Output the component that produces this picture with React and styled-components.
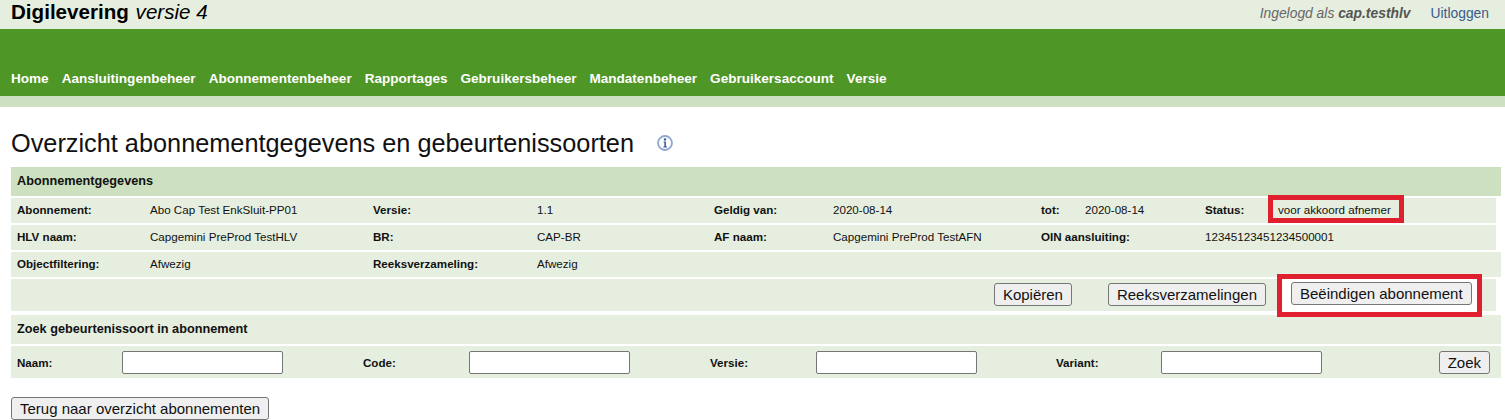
import React from 'react'
import styled, { createGlobalStyle } from 'styled-components'

const GlobalStyle = createGlobalStyle`
  html, body {
    margin: 0;
    padding: 0;
    background: #fff;
    font-family: "Liberation Sans", Arial, sans-serif;
    color: #111;
  }
`

const Page = styled.div`
  width: 1505px;
  height: 420px;
  overflow: hidden;
  position: relative;
`

const TopBar = styled.div`
  height: 29px;
  background: #e5eedf;
  display: flex;
  justify-content: space-between;
  padding: 0 16px 0 11px;
`

const Brand = styled.div`
  font-size: 20.6px;
  line-height: 23px;
  color: #000;
  b { font-weight: 700; }
  i { font-style: italic; margin-left: 1px; }
`

const Session = styled.div`
  display: flex;
  gap: 20px;
  font-size: 13.85px;
  line-height: 27px;
`

const LoggedIn = styled.span`
  font-style: italic;
  color: #666;
  b { color: #555; }
`

const Logout = styled.a`
  color: #3b5b8c;
`

const Nav = styled.nav`
  height: 67px;
  box-sizing: border-box;
  background: #4e9626;
  display: flex;
  align-items: flex-end;
  gap: 13px;
  padding: 0 0 9px 11px;
`

const NavLink = styled.a`
  color: #fff;
  font-size: 13.55px;
  font-weight: 700;
  line-height: 16px;
`

const Strip = styled.div`
  height: 11px;
  background: #cde0bf;
`

const TitleRow = styled.div`
  height: 60px;
  box-sizing: border-box;
  padding: 21px 0 0 11px;
  display: flex;
  align-items: flex-start;
  gap: 22px;
`

const Title = styled.h1`
  margin: 0;
  font-size: 25.3px;
  font-weight: 400;
  line-height: 30px;
  color: #111;
`

const InfoIcon = styled.svg`
  width: 18px;
  height: 18px;
  margin-top: 6px;
`

const Panel = styled.div`
  margin: 0 4px 0 11px;
  display: flex;
  flex-direction: column;
`

const SectionHead = styled.div`
  height: 29px;
  box-sizing: border-box;
  background: ${p => p.$light ? '#e5eedf' : '#cde0bf'};
  font-size: 12.7px;
  font-weight: 700;
  line-height: 28px;
  padding-left: 6px;
  margin: ${p => p.$light ? '4px 0 2px' : '0 0 2px'};
`

const DataRow = styled.div`
  height: 25px;
  box-sizing: border-box;
  background: #e5eedf;
  margin: ${p => p.$short ? '0 5px 2px 0' : '0 0 2px'};
  padding: 0 0 2px 6px;
  display: grid;
  grid-template-columns: 133px 223px 164px 177px 119px 208px 44px 120px 73px 1fr;
  align-items: center;
  font-size: 11.6px;
`

const Label = styled.span`
  font-weight: 700;
  grid-column: ${p => p.$col} / span ${p => p.$span || 1};
`

const Value = styled.span`
  grid-column: ${p => p.$col} / span 1;
  white-space: nowrap;
`

const ActionRow = styled.div`
  height: 32px;
  box-sizing: border-box;
  background: #e5eedf;
  margin-right: 5px;
  display: flex;
  justify-content: flex-end;
  align-items: flex-start;
  padding: 4px 230px 0 0;
`

const Button = styled.button`
  font-family: "Liberation Sans", Arial, sans-serif;
  font-size: 15px;
  line-height: 17px;
  height: 23px;
  padding: 0 8px;
  background: #efefef;
  border: 1px solid #767676;
  border-radius: 3px;
  color: #111;
  margin-left: ${p => p.$gap || 0}px;
  white-space: nowrap;
`

const SearchRow = styled.div`
  height: 32px;
  box-sizing: border-box;
  background: #e5eedf;
  padding: 0 11px 0 6px;
  display: grid;
  grid-template-columns: 105px 161px 80px 106px 161px 80px 106px 161px 79px 105px 161px 1fr;
  align-items: center;
  font-size: 11.6px;
`

const SearchInput = styled.input`
  grid-column: ${p => p.$col};
  width: 161px;
  height: 23px;
  box-sizing: border-box;
  background: #fff;
  border: 1px solid #767676;
  border-radius: 2px;
`

const SearchButton = styled(Button)`
  grid-column: 12;
  justify-self: end;
`

const BackRow = styled.div`
  padding: 19px 0 0 11px;
`

const Highlight = styled.div`
  position: absolute;
  left: ${p => p.$x}px;
  top: ${p => p.$y}px;
  width: ${p => p.$w}px;
  height: ${p => p.$h}px;
  box-sizing: border-box;
  border: 5px solid #e0202e;
  background: ${p => p.$fill};
`

const StatusText = styled.span`
  position: absolute;
  left: 5px;
  top: 1px;
  font-size: 11.6px;
  line-height: 18px;
  white-space: nowrap;
`

const FloatingButton = styled(Button)`
  position: absolute;
  left: 9px;
  top: 3px;
`

const navItems = [
  'Home', 'Aansluitingenbeheer', 'Abonnementenbeheer', 'Rapportages',
  'Gebruikersbeheer', 'Mandatenbeheer', 'Gebruikersaccount', 'Versie',
]

export default function App() {
  return (
    <Page>
      <GlobalStyle />
      <TopBar>
        <Brand><b>Digilevering</b> <i>versie 4</i></Brand>
        <Session>
          <LoggedIn>Ingelogd als <b>cap.testhlv</b></LoggedIn>
          <Logout>Uitloggen</Logout>
        </Session>
      </TopBar>
      <Nav>
        {navItems.map(item => <NavLink key={item}>{item}</NavLink>)}
      </Nav>
      <Strip />
      <TitleRow>
        <Title>Overzicht abonnementgegevens en gebeurtenissoorten</Title>
        <InfoIcon viewBox="0 0 18 18">
          <circle cx="9" cy="9" r="7" fill="#fff" stroke="#8fa8d0" strokeWidth="1.8" />
          <circle cx="9" cy="5.4" r="1.2" fill="#2f5597" />
          <path d="M7.6 7.6H9.9V12.4H11V13.4H7.4V12.4H8.4V8.6H7.6Z" fill="#2f5597" />
        </InfoIcon>
      </TitleRow>
      <Panel>
        <SectionHead>Abonnementgegevens</SectionHead>
        <DataRow $short>
          <Label $col={1}>Abonnement:</Label>
          <Value $col={2}>Abo Cap Test EnkSluit-PP01</Value>
          <Label $col={3}>Versie:</Label>
          <Value $col={4}>1.1</Value>
          <Label $col={5}>Geldig van:</Label>
          <Value $col={6}>2020-08-14</Value>
          <Label $col={7}>tot:</Label>
          <Value $col={8}>2020-08-14</Value>
          <Label $col={9}>Status:</Label>
        </DataRow>
        <DataRow $short>
          <Label $col={1}>HLV naam:</Label>
          <Value $col={2}>Capgemini PreProd TestHLV</Value>
          <Label $col={3}>BR:</Label>
          <Value $col={4}>CAP-BR</Value>
          <Label $col={5}>AF naam:</Label>
          <Value $col={6}>Capgemini PreProd TestAFN</Value>
          <Label $col={7} $span={2}>OIN aansluiting:</Label>
          <Value $col={9}>12345123451234500001</Value>
        </DataRow>
        <DataRow>
          <Label $col={1}>Objectfiltering:</Label>
          <Value $col={2}>Afwezig</Value>
          <Label $col={3}>Reeksverzameling:</Label>
          <Value $col={4}>Afwezig</Value>
        </DataRow>
        <ActionRow>
          <Button>Kopiëren</Button>
          <Button $gap={36}>Reeksverzamelingen</Button>
        </ActionRow>
        <SectionHead $light>Zoek gebeurtenissoort in abonnement</SectionHead>
        <SearchRow>
          <Label $col={1}>Naam:</Label>
          <SearchInput $col={2} />
          <Label $col={4}>Code:</Label>
          <SearchInput $col={5} />
          <Label $col={7}>Versie:</Label>
          <SearchInput $col={8} />
          <Label $col={10}>Variant:</Label>
          <SearchInput $col={11} />
          <SearchButton>Zoek</SearchButton>
        </SearchRow>
      </Panel>
      <BackRow>
        <Button>Terug naar overzicht abonnementen</Button>
      </BackRow>
      <Highlight $x={1268} $y={195} $w={136} $h={28} $fill="#e5eedf">
        <StatusText>voor akkoord afnemer</StatusText>
      </Highlight>
      <Highlight $x={1277} $y={274} $w={205} $h={43} $fill="#fff">
        <FloatingButton>Beëindigen abonnement</FloatingButton>
      </Highlight>
    </Page>
  )
}
